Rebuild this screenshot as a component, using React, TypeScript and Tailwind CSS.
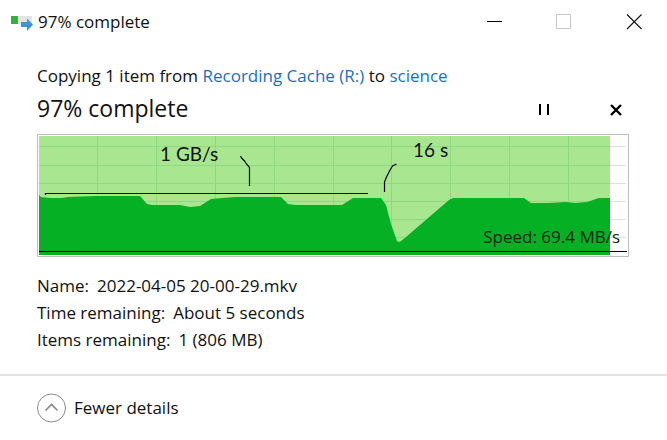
const gridRows = [12, 31, 49, 67, 85, 103]
const gridColumns = [60, 119, 178, 237, 296, 354, 413, 472, 531]

// Transfer speed over time, measured from the chart's top left corner
const speedPoints =
  '2,121 2,61 4,63 13,64 25,64 31,63 58,62 103,62 110,70 115,71 143,71 153,73 163,72 174,65 185,64 198,63 244,63 251,70 258,71 305,71 316,64 344,64 349,71 354,90 360,107 362,108 364,107 369,103 412,66 416,64 487,64 494,69 511,69 529,68 538,69 550,68 562,64 573,64 573,121'

const details = [
  { label: 'Name:', value: '2022-04-05 20-00-29.mkv' },
  { label: 'Time remaining:', value: 'About 5 seconds' },
  { label: 'Items remaining:', value: '1 (806 MB)' },
]

export default function App() {
  return (
    <div className="min-h-screen bg-white font-['Open_Sans','Noto_Sans',sans-serif] text-[17px] text-[#111]">
      <TitleBar />

      <main className="pt-[18px] pr-[38px] pb-[21px] pl-[37px]">
        <p className="leading-[28px]">
          Copying 1 item from{' '}
          <a href="#source" className="text-[#1a6fc4]">Recording Cache (R:)</a> to{' '}
          <a href="#destination" className="text-[#1a6fc4]">science</a>
        </p>

        <div className="flex items-start justify-between pt-[2px] pb-[10px]">
          <h1 className="text-[23px] leading-[32px]">97% complete</h1>
          <div className="flex gap-[48px] pt-[6px] pr-px">
            <button aria-label="Pause" className="flex h-6 w-6 items-center justify-center">
              <svg width="12" height="12" shapeRendering="crispEdges">
                <path d="M1 0h2v11H1zM9 0h2v11H9z" fill="#000" />
              </svg>
            </button>
            <button aria-label="Cancel" className="flex h-6 w-6 items-center justify-center">
              <svg width="12" height="12" viewBox="0 0 12 12">
                <path d="M1 1l10 10M11 1L1 11" stroke="#000" strokeWidth="2.4" />
              </svg>
            </button>
          </div>
        </div>

        <SpeedChart />

        <dl className="pt-[15px] leading-[27px]">
          {details.map(({ label, value }) => (
            <div key={label} className="flex gap-2">
              <dt>{label}</dt>
              <dd>{value}</dd>
            </div>
          ))}
        </dl>
      </main>

      <footer className="border-t-2 border-[#e2e2e2] px-[37px] pt-[17px]">
        <button className="flex items-center gap-2">
          <svg width="29" height="30" viewBox="0 0 29 30" fill="none">
            <circle cx="14.5" cy="15" r="14" stroke="#8a8a8a" />
            <path d="M8.5 17.5l6-6 6 6" stroke="#8a8a8a" strokeWidth="1.6" />
          </svg>
          <span className="leading-[30px]">Fewer details</span>
        </button>
      </footer>
    </div>
  )
}

function TitleBar() {
  return (
    <header className="flex h-[44px] items-center justify-between pl-[10px]">
      <div className="flex items-center gap-[5px]">
        <svg width="23" height="17" viewBox="0 0 23 17">
          <path d="M1 2h21v8H1z" fill="#e3e3e3" />
          <path d="M1 2h7v8H1z" fill="#35b03b" />
          <path d="M11 8h6V4.500l6 6.200-6 6.300V13h-6z" fill="#3d94d6" />
        </svg>
        <span>97% complete</span>
      </div>

      <div className="flex h-full gap-1">
        <button aria-label="Minimize" className="flex w-[66px] items-center justify-center">
          <svg width="16" height="16" shapeRendering="crispEdges">
            <path d="M1 7h15v1H1z" fill="#000" />
          </svg>
        </button>
        <button aria-label="Maximize" className="flex w-[66px] items-center justify-center" disabled>
          <svg width="16" height="16" fill="none">
            <path d="M.5.5h14v14H.5z" stroke="#c8c8c8" />
          </svg>
        </button>
        <button aria-label="Close" className="flex w-[66px] items-center justify-center">
          <svg width="16" height="16" fill="none">
            <path d="M1 .5l14.500 14.500M15.500.5L1 15" stroke="#111" strokeWidth="1.1" />
          </svg>
        </button>
      </div>
    </header>
  )
}

function SpeedChart() {
  return (
    <svg viewBox="0 0 592 123" className="block w-full" role="img" aria-label="Transfer speed">
      <path d="M.5.5h591v122H.5z" fill="#fff" stroke="#bdbdbd" />
      <path d="M2 2h571v119H2z" fill="#a8e78f" />

      {/* Grid */}
      {gridRows.map((y) => (
        <g key={y}>
          <path d={`M2 ${y + 0.5}H573`} stroke="#8fd981" />
          <path d={`M573 ${y + 0.5}H589`} stroke="#dce3dc" />
        </g>
      ))}
      {gridColumns.map((x) => (
        <path key={x} d={`M${x + 0.5} 2V121`} stroke="#8fd981" />
      ))}

      <polygon points={speedPoints} fill="#06b025" />
      <path d="M2 117.5H590" stroke="#000" />

      {/* Annotations */}
      <g fill="none" stroke="#000" strokeWidth="1.2">
        <path d="M8.5 61v-1.5H331" />
        <path d="M203.5 22l1 2 3 3 2 3 3 3.5V52" />
        <path d="M347.5 58V48l2-5 3-6 3-5 4-2" />
      </g>
      <g fill="#111" fontSize="19" fontFamily="Lato, sans-serif">
        <text x="123" y="27">1 GB/s</text>
        <text x="376" y="23">16 s</text>
      </g>
      <text x="583" y="109" fontSize="17" textAnchor="end" fill="#0d260d">Speed: 69.4 MB/s</text>
    </svg>
  )
}
